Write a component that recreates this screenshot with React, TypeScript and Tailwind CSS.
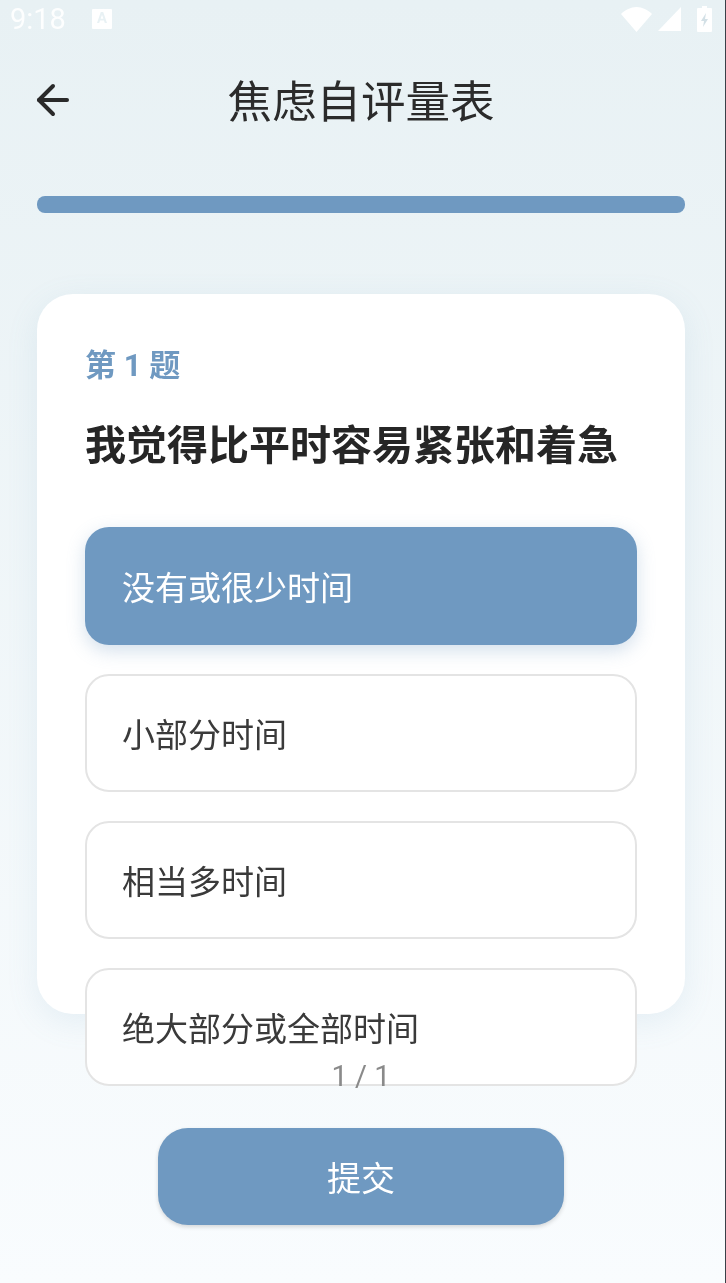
import { ArrowLeft } from 'lucide-react';

const options = ['没有或很少时间', '小部分时间', '相当多时间', '绝大部分或全部时间'];
const cjk = "font-['Roboto','Noto_Sans_CJK_SC',sans-serif]";

function StatusBar() {
  return (
    <div className="flex h-[38px] items-center pl-[10px] pr-[10px] text-white">
      <span className="w-[82px] text-[29px] leading-none opacity-90">9:18</span>
      <svg viewBox="0 0 20 20" className="h-[20px] w-[20px]">
        <path fill="currentColor" fillRule="evenodd" d="M1 0h18a1 1 0 0 1 1 1v18a1 1 0 0 1-1 1H1a1 1 0 0 1-1-1V1a1 1 0 0 1 1-1zM8.800 3 5 14h2.200l.8-2.600h4l.8 2.600H15L11.200 3zM10 5.800l1.400 4H8.600z" />
      </svg>
      <div className="ml-auto flex items-center">
        <svg viewBox="0 0 31 25" className="h-[25px] w-[31px]">
          <path fill="currentColor" d="M0 7C4 3 10 0 15.500 0S27 3 31 7L15.500 25z" />
        </svg>
        <svg viewBox="0 0 23 24" className="ml-[6px] h-[24px] w-[23px]">
          <path fill="currentColor" d="M23 0v24H0z" />
        </svg>
        <svg viewBox="0 0 15 26" className="ml-[16px] h-[26px] w-[15px]">
          <path fill="currentColor" d="M5 0h5v2h4a1 1 0 0 1 1 1v22a1 1 0 0 1-1 1H1a1 1 0 0 1-1-1V3a1 1 0 0 1 1-1h4z" />
          <path fill="#d3e0e6" d="M9 7 4 15h3l-1 6 5-8H8z" />
        </svg>
      </div>
    </div>
  );
}

export default function App() {
  return (
    <div className={`${cjk} h-[1283px] w-[726px] overflow-hidden border-r-[1px] border-[#3a4048] bg-gradient-to-b from-[#e8f1f4] to-[#f9fcfe]`}>
      <div className="w-[722px] blur-[0.6px]">
        <StatusBar />

        <div className="relative mx-[37px] mt-[38px] flex h-[50px] items-center justify-center">
          <ArrowLeft className="absolute left-[-8px] top-[0px] h-[48px] w-[48px] text-[#2a2a2a]" strokeWidth={2} />
          <h1 className="translate-y-[2px] text-[44.500px] leading-none font-normal text-[#2b2b2b]">焦虑自评量表</h1>
        </div>

        <div className="mx-[37px] mt-[70px] h-[17px] rounded-[8px] bg-[#6f99c1]" />

        <div className="mx-[37px] mt-[81px] h-[720px] rounded-[36px] bg-white px-[48px] pt-[52px] shadow-[0_8px_32px_rgba(111,153,193,0.12)]">
          <p className="text-[31px] leading-[40px] font-bold text-[#6f99c1]">第 1 题</p>
          <h2 className="mt-[30px] text-[41px] leading-[60px] font-bold whitespace-nowrap text-[#262626]">
            我觉得比平时容易紧张和着急
          </h2>
          <div className="mt-[51px] flex flex-col gap-[29px]">
            {options.map((label, i) => (
              <div
                key={label}
                className={
                  i === 0
                    ? 'flex h-[118px] items-center rounded-[24px] bg-[#6f99c1] px-[37px] pt-[6px] text-[33px] text-white shadow-[0_6px_18px_rgba(111,153,193,0.3)]'
                    : 'flex h-[118px] items-center rounded-[24px] border-[2.5px] border-[#e4e4e4] bg-white px-[35px] pt-[6px] text-[33px] text-[#3a3a3a]'
                }
              >
                {label}
              </div>
            ))}
          </div>
        </div>

        <p className="relative mt-[44px] text-center text-[29px] leading-[36px] text-[#8a8a8a]">1 / 1</p>

        <button className="mx-auto mt-[34px] flex h-[97px] w-[406px] items-center justify-center rounded-[30px] bg-[#6f99c1] pt-[5px] text-[34px] text-white shadow-[0_2px_4px_rgba(0,0,0,0.15)]">
          提交
        </button>
      </div>
    </div>
  );
}
